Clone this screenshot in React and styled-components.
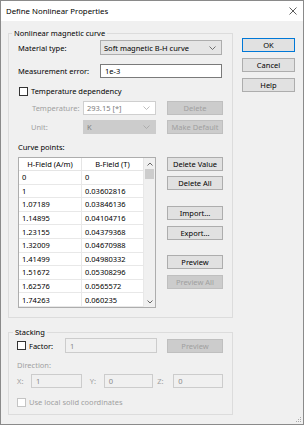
import styled, { createGlobalStyle } from 'styled-components'

const GlobalStyle = createGlobalStyle`
  html, body { margin: 0; padding: 0; background: #fff; }
  body {
    font-family: "Noto Sans", "DejaVu Sans", sans-serif;
    font-size: 7.5px;
    color: #000;
  }
  * { box-sizing: border-box; }
`

const Window = styled.div`
  width: 304px;
  height: 425px;
  border: 1px solid #8a8a8a;
  background: #f0f0f0;
  display: flex;
  flex-direction: column;
  position: relative;
`

const TitleBar = styled.div`
  height: 20px;
  background: #fff;
  display: flex;
  align-items: center;
  justify-content: space-between;
  padding: 0 6px 0 5px;
  font-size: 7.8px;
`

const Body = styled.div`
  flex: 1;
  display: flex;
  padding: 6px 0 0 7px;
  gap: 9px;
`

const LeftCol = styled.div`
  width: 225px;
  display: flex;
  flex-direction: column;
  gap: 8px;
`

const RightCol = styled.div`
  width: 53px;
  margin-top: 11px;
  display: flex;
  flex-direction: column;
  gap: 6px;
`

const Group = styled.fieldset`
  margin: 0;
  padding: 0 9px ${p => p.$bottom || 9}px ${p => p.$left || 9}px;
  border: 1px solid #dcdcdc;
  min-width: 0;
`

const Legend = styled.legend`
  font-size: 7.5px;
  line-height: 12px;
  padding: 0 2px;
  margin-left: ${p => p.$shift || -6}px;
`

const Row = styled.div`
  display: flex;
  align-items: center;
  height: ${p => p.$h || 14}px;
  margin-top: ${p => p.$mt || 0}px;
  color: ${p => (p.$disabled ? '#a0a0a0' : '#000')};
`

const Label = styled.span`
  width: ${p => p.$w}px;
  flex: none;
  padding-left: ${p => p.$indent || 0}px;
  margin-left: ${p => p.$ml || 0}px;
  white-space: nowrap;
`

const Combo = styled.div`
  width: ${p => p.$w}px;
  height: 100%;
  display: flex;
  align-items: center;
  justify-content: space-between;
  padding: 0 5px 0 3px;
  border: 1px solid ${p => (p.$variant === 'off' ? '#cfcfcf' : p.$variant === 'grey' ? '#cccccc' : '#adadad')};
  background: ${p => (p.$variant === 'off' ? '#fff' : p.$variant === 'grey' ? '#cccccc' : '#e5e5e5')};
  color: ${p => (p.$variant ? '#7d7d7d' : '#000')};
`

const TextBox = styled.div`
  width: ${p => p.$w}px;
  height: 100%;
  display: flex;
  align-items: center;
  padding: 0 4px;
  border: 1px solid ${p => (p.$off ? '#cccccc' : '#7a7a7a')};
  background: ${p => (p.$off ? '#f0f0f0' : '#fff')};
  color: ${p => (p.$off ? '#8a8a8a' : '#000')};
`

const Button = styled.div`
  width: ${p => p.$w || 56}px;
  height: 14px;
  flex: none;
  margin-left: ${p => p.$ml || 0}px;
  margin-top: ${p => p.$mt || 0}px;
  display: flex;
  align-items: center;
  justify-content: center;
  border: 1px solid ${p => (p.$default ? '#0078d7' : p.$off ? '#bfbfbf' : '#adadad')};
  background: ${p => (p.$off ? '#cccccc' : '#e1e1e1')};
  color: ${p => (p.$off ? '#a0a0a0' : '#000')};
  white-space: nowrap;
`

const Box = styled.span`
  width: 9px;
  height: 9px;
  flex: none;
  border: 1px solid ${p => (p.$off ? '#c4c4c4' : '#333')};
  background: #fff;
  margin: 0 3px 0 ${p => p.$ml || 0}px;
`

const TableArea = styled.div`
  display: flex;
  margin-top: 3px;
`

const Table = styled.div`
  width: 138px;
  height: 151px;
  border: 1px solid #adadad;
  background: #fff;
  display: flex;
  overflow: hidden;
`

const Grid = styled.div`
  flex: 1;
  display: grid;
  grid-template-columns: 63px 1fr;
  grid-auto-rows: 13.6px;
  grid-template-rows: 13px;
  align-content: start;
`

const Head = styled.div`
  display: flex;
  align-items: center;
  justify-content: center;
  border-right: 1px solid #e5e5e5;
  border-bottom: 1px solid #e5e5e5;
`

const Cell = styled.div`
  display: flex;
  align-items: center;
  padding-left: 3px;
  border-right: 1px solid #e8e8e8;
  border-bottom: 1px solid #e8e8e8;
  white-space: nowrap;
`

const Scroll = styled.div`
  width: 11px;
  display: flex;
  flex-direction: column;
  align-items: center;
  background: #f0f0f0;
`

const Arrow = styled.div`
  height: 11px;
  display: flex;
  align-items: center;
  justify-content: center;
`

const Thumb = styled.div`
  width: 9px;
  height: 10px;
  background: #cdcdcd;
`

const Spacer = styled.div`
  flex: 1;
`

const SideButtons = styled.div`
  display: flex;
  flex-direction: column;
  margin-left: 11px;
`

const Grip = styled.svg`
  position: absolute;
  right: 1px;
  bottom: 1px;
`

const Chevron = ({ color = '#606060' }) => (
  <svg width="7" height="4" viewBox="0 0 7 4">
    <polyline points="0.5,0.5 3.5,3.5 6.5,0.5" fill="none" stroke={color} strokeWidth="0.9" />
  </svg>
)

const Close = () => (
  <svg width="8" height="8" viewBox="0 0 8 8">
    <path d="M0.5 0.5 L7.5 7.5 M7.5 0.5 L0.5 7.5" stroke="#333" strokeWidth="0.8" />
  </svg>
)

const points = [
  ['0', '0'],
  ['1', '0.03602816'],
  ['1.07189', '0.03846136'],
  ['1.14895', '0.04104716'],
  ['1.23155', '0.04379368'],
  ['1.32009', '0.04670988'],
  ['1.41499', '0.04980332'],
  ['1.51672', '0.05308296'],
  ['1.62576', '0.0565572'],
  ['1.74263', '0.060235'],
]

export default function App() {
  return (
    <>
      <GlobalStyle />
      <Window>
        <TitleBar>
          <span>Define Nonlinear Properties</span>
          <Close />
        </TitleBar>
        <Body>
          <LeftCol>
            <Group>
              <Legend>Nonlinear magnetic curve</Legend>
              <Row $h={15} $mt={1}>
                <Label $w={82}>Material type:</Label>
                <Combo $w={122}>
                  <span>Soft magnetic B-H curve</span>
                  <Chevron />
                </Combo>
              </Row>
              <Row $mt={9}>
                <Label $w={82}>Measurement error:</Label>
                <TextBox $w={122}>1e-3</TextBox>
              </Row>
              <Row $h={12} $mt={7}>
                <Box $ml={1} />
                <span>Temperature dependency</span>
              </Row>
              <Row $mt={4} $disabled>
                <Label $w={65} $indent={14}>Temperature:</Label>
                <Combo $w={73} $variant="off">
                  <span>293.15 [*]</span>
                  <Chevron color="#b5b5b5" />
                </Combo>
                <Button $ml={11} $off>Delete</Button>
              </Row>
              <Row $mt={5} $disabled>
                <Label $w={65} $indent={13}>Unit:</Label>
                <Combo $w={73} $variant="grey">
                  <span>K</span>
                  <Chevron color="#a8a8a8" />
                </Combo>
                <Button $ml={11} $off>Make Default</Button>
              </Row>
              <Row $mt={6}>Curve points:</Row>
              <TableArea>
                <Table>
                  <Grid>
                    <Head>H-Field (A/m)</Head>
                    <Head>B-Field (T)</Head>
                    {points.flatMap(([h, b]) => [
                      <Cell key={`h-${h}`}>{h}</Cell>,
                      <Cell key={`b-${h}`}>{b}</Cell>,
                    ])}
                  </Grid>
                  <Scroll>
                    <Arrow>
                      <svg width="6" height="4" viewBox="0 0 6 4">
                        <polyline points="0.5,3.5 3,1 5.5,3.5" fill="none" stroke="#555" strokeWidth="0.9" />
                      </svg>
                    </Arrow>
                    <Thumb />
                    <Spacer />
                    <Arrow>
                      <svg width="6" height="4" viewBox="0 0 6 4">
                        <polyline points="0.5,0.5 3,3 5.5,0.5" fill="none" stroke="#555" strokeWidth="0.9" />
                      </svg>
                    </Arrow>
                  </Scroll>
                </Table>
                <SideButtons>
                  <Button>Delete Value</Button>
                  <Button $mt={5}>Delete All</Button>
                  <Button $mt={16}>Import...</Button>
                  <Button $mt={6}>Export...</Button>
                  <Button $mt={15}>Preview</Button>
                  <Button $mt={6} $off>Preview All</Button>
                </SideButtons>
              </TableArea>
            </Group>
            <Group $left={8} $bottom={6}>
              <Legend $shift={-4}>Stacking</Legend>
              <Row $h={15}>
                <Box />
                <Label $w={36}>Factor:</Label>
                <TextBox $w={92} $off>1</TextBox>
                <Button $ml={10} $off>Preview</Button>
              </Row>
              <Row $mt={5} $disabled>Direction:</Row>
              <Row $mt={2} $disabled>
                <Label $w={14}>X:</Label>
                <TextBox $w={51} $off>1</TextBox>
                <Label $w={14} $ml={8}>Y:</Label>
                <TextBox $w={50} $off>0</TextBox>
                <Label $w={16} $ml={4}>Z:</Label>
                <TextBox $w={50} $off>0</TextBox>
              </Row>
              <Row $h={12} $mt={8} $disabled>
                <Box $off />
                <span>Use local solid coordinates</span>
              </Row>
            </Group>
          </LeftCol>
          <RightCol>
            <Button $w={53} $default>OK</Button>
            <Button $w={53}>Cancel</Button>
            <Button $w={53}>Help</Button>
          </RightCol>
        </Body>
        <Grip width="8" height="8" viewBox="0 0 8 8">
          <rect x="6" y="2" width="1" height="1" fill="#aaa" />
          <rect x="4" y="4" width="1" height="1" fill="#aaa" />
          <rect x="6" y="4" width="1" height="1" fill="#aaa" />
          <rect x="2" y="6" width="1" height="1" fill="#aaa" />
          <rect x="4" y="6" width="1" height="1" fill="#aaa" />
          <rect x="6" y="6" width="1" height="1" fill="#aaa" />
        </Grip>
      </Window>
    </>
  )
}
